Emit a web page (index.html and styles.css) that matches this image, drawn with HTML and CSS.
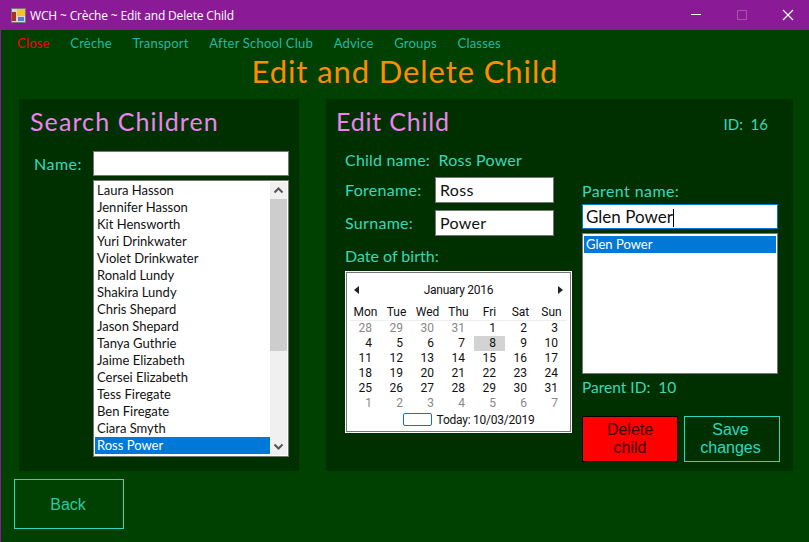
FILE: index.html
```html
<!DOCTYPE html>
<html lang="en">
<head>
    <meta charset="UTF-8">
    <meta name="viewport" content="width=device-width, initial-scale=1.0">
    <title>WCH ~ Crèche ~ Edit and Delete Child</title>
    <link rel="stylesheet" href="styles.css">
</head>
<body>
    <div class="window">
        <div class="titlebar">
            <svg class="app-icon" width="15" height="15" viewBox="0 0 15 15">
                <rect x="0.5" y="0.5" width="14" height="14" fill="#d8d8d8" stroke="#777"/>
                <rect x="1" y="4" width="4" height="9" fill="#b03020"/>
                <rect x="6" y="1" width="8" height="7" fill="#f4c430"/>
                <rect x="7" y="9" width="6" height="4" fill="#4a80d0"/>
            </svg>
            <span class="window-title">WCH ~ Crèche ~ Edit and Delete Child</span>
            <div class="window-controls">
                <span class="control"><svg width="12" height="12" viewBox="0 0 12 12"><rect x="1" y="5" width="10" height="1" fill="#fff"/></svg></span>
                <span class="control"><svg width="12" height="12" viewBox="0 0 12 12"><rect x="1.5" y="1.5" width="9" height="9" fill="none" stroke="#a655ae"/></svg></span>
                <span class="control"><svg width="12" height="12" viewBox="0 0 12 12"><path d="M1 1L11 11M11 1L1 11" stroke="#fff" stroke-width="1.2"/></svg></span>
            </div>
        </div>
        <div class="content">
            <nav class="menu">
                <a class="close-link">Close</a>
                <a>Crèche</a>
                <a>Transport</a>
                <a>After School Club</a>
                <a>Advice</a>
                <a>Groups</a>
                <a>Classes</a>
            </nav>
            <h1>Edit and Delete Child</h1>
            <div class="panels">
                <section class="panel search-panel">
                    <h2>Search Children</h2>
                    <div class="name-row">
                        <label>Name:</label>
                        <div class="text-box name-box"></div>
                    </div>
                    <div class="listbox child-list">
                        <ul>
                            <li>Laura Hasson</li>
                            <li>Jennifer Hasson</li>
                            <li>Kit Hensworth</li>
                            <li>Yuri Drinkwater</li>
                            <li>Violet Drinkwater</li>
                            <li>Ronald Lundy</li>
                            <li>Shakira Lundy</li>
                            <li>Chris Shepard</li>
                            <li>Jason Shepard</li>
                            <li>Tanya Guthrie</li>
                            <li>Jaime Elizabeth</li>
                            <li>Cersei Elizabeth</li>
                            <li>Tess Firegate</li>
                            <li>Ben Firegate</li>
                            <li>Ciara Smyth</li>
                            <li class="selected">Ross Power</li>
                        </ul>
                        <div class="scrollbar">
                            <svg width="17" height="17" viewBox="0 0 17 17"><path d="M4.5 10.5L8.5 6.5L12.5 10.5" fill="none" stroke="#555" stroke-width="2"/></svg>
                            <div class="track"><div class="thumb"></div></div>
                            <svg width="17" height="17" viewBox="0 0 17 17"><path d="M4.5 6.5L8.5 10.5L12.5 6.5" fill="none" stroke="#555" stroke-width="2"/></svg>
                        </div>
                    </div>
                </section>
                <section class="panel edit-panel">
                    <div class="edit-head">
                        <h2>Edit Child</h2>
                        <span class="child-id">ID:&nbsp; 16</span>
                    </div>
                    <div class="child-name">Child name:&nbsp; Ross Power</div>
                    <div class="edit-columns">
                        <div class="edit-left">
                            <div class="field-row">
                                <label>Forename:</label>
                                <div class="text-box small-box">Ross</div>
                            </div>
                            <div class="field-row">
                                <label>Surname:</label>
                                <div class="text-box small-box">Power</div>
                            </div>
                            <div class="dob-label">Date of birth:</div>
                            <div class="calendar">
                                <div class="cal-head">
                                    <svg width="5" height="8" viewBox="0 0 5 8"><path d="M5 0V8L0 4Z" fill="#222"/></svg>
                                    <span>January 2016</span>
                                    <svg width="5" height="8" viewBox="0 0 5 8"><path d="M0 0V8L5 4Z" fill="#222"/></svg>
                                </div>
                                <div class="cal-grid days">
                                    <span>Mon</span><span>Tue</span><span>Wed</span><span>Thu</span><span>Fri</span><span>Sat</span><span>Sun</span>
                                </div>
                                <div class="cal-grid dates">
                                    <span class="other">28</span><span class="other">29</span><span class="other">30</span><span class="other">31</span><span>1</span><span>2</span><span>3</span>
                                    <span>4</span><span>5</span><span>6</span><span>7</span><span class="picked">8</span><span>9</span><span>10</span>
                                    <span>11</span><span>12</span><span>13</span><span>14</span><span>15</span><span>16</span><span>17</span>
                                    <span>18</span><span>19</span><span>20</span><span>21</span><span>22</span><span>23</span><span>24</span>
                                    <span>25</span><span>26</span><span>27</span><span>28</span><span>29</span><span>30</span><span>31</span>
                                    <span class="other">1</span><span class="other">2</span><span class="other">3</span><span class="other">4</span><span class="other">5</span><span class="other">6</span><span class="other">7</span>
                                </div>
                                <div class="cal-today"><i></i>Today: 10/03/2019</div>
                            </div>
                        </div>
                        <div class="edit-right">
                            <div class="parent-label">Parent name:</div>
                            <div class="text-box parent-box">Glen Power<i class="caret"></i></div>
                            <div class="listbox parent-list">
                                <ul><li class="selected">Glen Power</li></ul>
                            </div>
                            <div class="parent-id">Parent ID:&nbsp; 10</div>
                            <div class="actions">
                                <button class="btn-delete">Delete<br>child</button>
                                <button class="btn-save">Save<br>changes</button>
                            </div>
                        </div>
                    </div>
                </section>
            </div>
            <button class="btn-back">Back</button>
        </div>
    </div>
</body>
</html>
```

FILE: styles.css
```css
* {
    box-sizing: border-box;
}
html, body {
    margin: 0;
    padding: 0;
}
body {
    width: 809px;
    height: 542px;
    overflow: hidden;
    background: #004000;
    font-family: "Lato", "Liberation Sans", sans-serif;
    color: #38d8bc;
}
.window {
    height: 542px;
    display: flex;
    flex-direction: column;
    border-left: 1px solid #8b1a96;
}
.titlebar {
    height: 30px;
    flex: none;
    margin-left: -1px;
    padding-left: 11px;
    display: flex;
    align-items: center;
    gap: 4px;
    background: #8b1a96;
    color: #fff;
    font-family: "Open Sans", sans-serif;
    font-size: 12px;
    letter-spacing: -0.15px;
}
.window-controls {
    margin-left: auto;
    margin-right: -2px;
    display: flex;
}
.control {
    width: 46px;
    height: 30px;
    display: flex;
    align-items: center;
    justify-content: center;
}
.content {
    flex: 1;
    display: flex;
    flex-direction: column;
}
.menu {
    height: 25px;
    padding-left: 16px;
    display: flex;
    align-items: center;
    gap: 20.7px;
    font-size: 13px;
    letter-spacing: 0.2px;
    color: #20b8a8;
}
.close-link {
    color: #ff0000;
}
h1 {
    margin: 0;
    height: 44px;
    text-align: center;
    font-size: 31px;
    line-height: 32px;
    font-weight: 400;
    letter-spacing: 0.9px;
    color: #ff8c00;
}
h2 {
    margin: 0;
    font-size: 25px;
    line-height: 30px;
    font-weight: 400;
    letter-spacing: 0.8px;
    color: #ee82ee;
}
.search-panel h2 {
    padding-left: 1px;
    letter-spacing: 1.1px;
}
.panels {
    height: 372px;
    margin-left: 18px;
    display: flex;
    gap: 27px;
}
.panel {
    height: 100%;
    background: #003000;
}
.search-panel {
    width: 280px;
    padding: 7px 0 0 10px;
}
.edit-panel {
    width: 467px;
    padding: 7px 0 0 10px;
}
.text-box {
    background: #fff;
    border: 1px solid #777;
    color: #111;
}
.name-row {
    margin-top: 15px;
    display: flex;
    align-items: center;
}
.name-row label {
    width: 64px;
    padding-left: 5px;
    font-size: 16px;
    letter-spacing: 0.5px;
}
.name-box {
    width: 196px;
    height: 25px;
}
.listbox {
    background: #fff;
    border: 1px solid #777;
    color: #111;
    font-size: 13px;
}
.listbox ul {
    margin: 0;
    padding: 0;
    list-style: none;
}
.listbox li {
    height: 17px;
    line-height: 17px;
    padding-left: 2px;
}
.listbox li.selected {
    background: #0078d7;
    color: #fff;
}
.child-list {
    width: 196px;
    height: 277px;
    margin: 4px 0 0 64px;
    padding: 1px;
    display: flex;
}
.child-list ul {
    flex: 1;
}
.scrollbar {
    width: 17px;
    display: flex;
    flex-direction: column;
    background: #f0f0f0;
}
.track {
    flex: 1;
}
.thumb {
    height: 152px;
    background: #cdcdcd;
}
.edit-head {
    display: flex;
    justify-content: space-between;
}
.child-id {
    padding: 9px 25px 0 0;
    font-size: 15px;
    line-height: 18px;
}
.child-name {
    margin: 14px 0 0 9px;
    height: 20px;
    font-size: 16px;
    letter-spacing: 0.2px;
    line-height: 20px;
}
.edit-columns {
    margin-left: 9px;
    display: flex;
    gap: 10px;
}
.edit-left {
    width: 227px;
    padding-top: 7px;
}
.field-row {
    height: 33px;
    display: flex;
    font-size: 16px;
    letter-spacing: 0.3px;
}
.field-row label {
    width: 90px;
    line-height: 26px;
}
.small-box {
    width: 119px;
    height: 26px;
    padding-left: 4px;
    font-size: 16px;
    line-height: 24px;
}
.dob-label {
    height: 28px;
    padding-top: 3px;
    font-size: 16px;
    line-height: 20px;
}
.calendar {
    width: 227px;
    height: 162px;
    padding: 0 4px;
    background: #fff;
    border: 1px solid #fff;
    box-shadow: inset 0 0 0 1px #777;
    color: #111;
    font-family: "Roboto", sans-serif;
    font-size: 12px;
}
.cal-head {
    height: 32px;
    padding: 4px 4px 0;
    display: flex;
    align-items: center;
    justify-content: space-between;
    letter-spacing: -0.25px;
}
.cal-grid {
    display: grid;
    grid-template-columns: repeat(7, 31px);
    text-align: center;
}
.days {
    height: 17px;
    line-height: 16px;
    border-bottom: 1px solid #eee;
}
.dates span {
    height: 15px;
    line-height: 15px;
    padding-right: 9px;
    text-align: right;
}
.dates .other {
    color: #888;
}
.dates .picked {
    background: #d3d3d3;
}
.cal-today {
    height: 17px;
    padding-left: 20px;
    display: flex;
    align-items: center;
    justify-content: center;
    gap: 5px;
    letter-spacing: -0.25px;
}
.cal-today i {
    width: 29px;
    height: 13px;
    border: 1px solid #0078d7;
    border-radius: 2px;
}
.edit-right {
    width: 196px;
    padding-top: 10px;
}
.parent-label {
    height: 24px;
    padding-top: 1px;
    font-size: 16px;
    letter-spacing: 0.4px;
    line-height: 20px;
}
.parent-box {
    width: 196px;
    height: 25px;
    padding-left: 3px;
    border: 1px solid #0078d7;
    font-size: 17px;
    line-height: 23px;
}
.caret {
    display: inline-block;
    width: 1px;
    height: 18px;
    background: #000;
    vertical-align: -4px;
}
.parent-list {
    width: 196px;
    height: 141px;
    margin-top: 4px;
    padding: 2px 1px 1px;
}
.parent-id {
    height: 42px;
    padding-top: 3px;
    font-size: 15.5px;
    line-height: 20px;
}
.actions {
    display: flex;
    gap: 6px;
}
.actions button {
    flex: none;
    width: 96px;
    height: 46px;
    padding: 0;
    font-family: "Liberation Sans", sans-serif;
    font-size: 16px;
    line-height: 18px;
}
.btn-delete {
    background: #ff0000;
    border: 1px solid #000;
    color: #400000;
}
.actions .btn-save {
    padding-right: 3px;
    background: #003000;
    border: 1px solid #2fd6c0;
    color: #2fd6c0;
}
.btn-back {
    width: 110px;
    height: 50px;
    margin: 8px 0 0 13px;
    padding: 1px 2px 0 0;
    background: #004000;
    border: 1px solid #2fd6c0;
    color: #2fc8a0;
    font-family: "Liberation Sans", sans-serif;
    font-size: 16px;
}
```
